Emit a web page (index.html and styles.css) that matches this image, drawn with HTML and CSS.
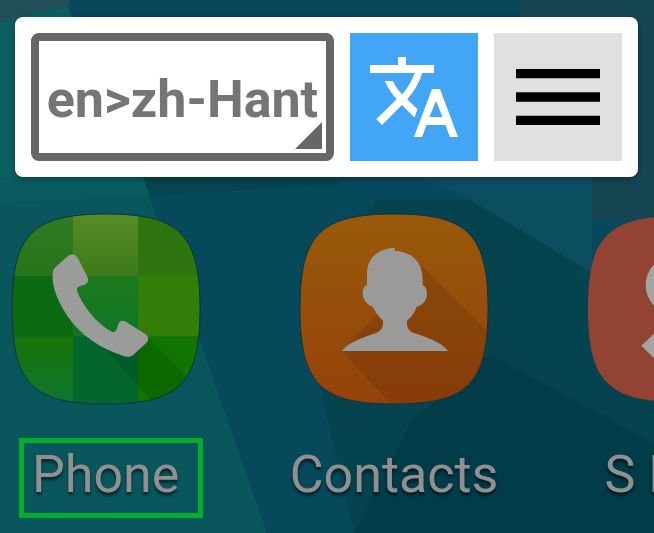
FILE: index.html
```html
<!DOCTYPE html>
<html lang="en">
<head>
    <meta charset="UTF-8">
    <meta name="viewport" content="width=device-width, initial-scale=1.0">
    <title>Translate toolbar</title>
    <link rel="stylesheet" href="styles.css">
</head>
<body>
<div class="screen">
    <!-- wallpaper -->
    <svg class="wallpaper" viewBox="0 0 654 533">
        <rect width="654" height="533" fill="#05495b"/>
        <polygon points="0,0 70,0 68,6 0,22" fill="#234f58"/>
        <polygon points="0,22 68,6 72,17 72,177 0,177" fill="#0b5f61"/>
        <polygon points="520,0 654,0 654,220 592,220 592,177 520,177" fill="#154553"/>
        <polygon points="0,177 143,177 267,533 0,533" fill="#09565c"/>
        <polygon points="0,177 143,177 149,195 0,203" fill="#0a5b5f"/>
        <polygon points="143,177 350,177 330,186 150,195" fill="#06444f"/>
        <polygon points="420,177 592,177 592,273 470,200" fill="#0a4e60"/>
        <polygon points="377,200 470,200 592,273 654,300 654,445 620,425 490,355 437,400 412,420 354,533 300,300" fill="#05434f"/>
        <polygon points="437,400 490,355 620,425 654,445 654,533 354,533 412,420" fill="#033c49"/>
    </svg>

    <div class="toolbar">
        <div class="lang-box">
            <span class="lang-text">en&gt;zh-Hant</span>
            <span class="lang-corner"></span>
        </div>
        <div class="tool-btn tool-translate">
            <svg viewBox="0 0 24 24" width="96" height="96"><path fill="#fff" d="M12.87 15.07l-2.54-2.51.03-.03c1.74-1.94 2.98-4.17 3.71-6.53H17V4h-7V2H8v2H1v1.99h11.17C11.5 7.92 10.44 9.75 9 11.35 8.07 10.32 7.3 9.19 6.69 8h-2c.73 1.63 1.73 3.17 2.98 4.56l-5.09 5.02L4 19l5-5 3.11 3.11.76-2.04zM18.5 10h-2L12 22h2l1.12-3h4.75L21 22h2l-4.5-12zm-2.62 7l1.62-4 1.62 4h-3.24z"/></svg>
        </div>
        <div class="tool-btn tool-menu">
            <svg viewBox="0 0 24 24" width="112" height="112"><path d="M3 18h18v-2H3v2zm0-5h18v-2H3v2zm0-7v2h18V6H3z"/></svg>
        </div>
    </div>

    <div class="apps">
        <div class="app">
            <!-- viewBox values are the coordinates read off the zoomed crop -->
            <svg class="app-icon" viewBox="36 42 564 570">
                <defs>
                    <clipPath id="phone-clip"><path d="M318 42C538 42 600 102 600 326C600 552 538 612 318 612C98 612 36 552 36 326C36 102 98 42 318 42Z"/></clipPath>
                    <linearGradient id="phone-tl" x1="0" y1="0" x2="0" y2="1"><stop offset="0" stop-color="#2e7a22"/><stop offset="1" stop-color="#27751b"/></linearGradient>
                    <linearGradient id="phone-tm" x1="0" y1="0" x2="0" y2="1"><stop offset="0" stop-color="#578c26"/><stop offset="1" stop-color="#3c7a17"/></linearGradient>
                    <linearGradient id="phone-bl" x1="0" y1="0" x2="0" y2="1"><stop offset="0" stop-color="#197306"/><stop offset="1" stop-color="#0e7632"/></linearGradient>
                    <linearGradient id="phone-mid" x1="0" y1="0" x2="0" y2="1"><stop offset="0" stop-color="#1d7a1c"/><stop offset="1" stop-color="#0f7528"/></linearGradient>
                </defs>
                <g clip-path="url(#phone-clip)">
                    <rect x="36" y="42" width="183" height="186" fill="url(#phone-tl)"/>
                    <rect x="219" y="42" width="195" height="186" fill="url(#phone-tm)"/>
                    <rect x="414" y="42" width="186" height="186" fill="#2e740f"/>
                    <rect x="36" y="228" width="183" height="182" fill="#0b6a12"/>
                    <rect x="219" y="228" width="195" height="182" fill="url(#phone-mid)"/>
                    <rect x="414" y="228" width="186" height="182" fill="#337e08"/>
                    <rect x="36" y="410" width="183" height="202" fill="url(#phone-bl)"/>
                    <rect x="219" y="410" width="195" height="202" fill="#04662c"/>
                    <rect x="414" y="410" width="186" height="202" fill="#0f7400"/>
                    <polygon points="445,415 610,580 610,620 470,620 300,430" fill="#000" opacity="0.1"/>
                </g>
                <path d="M36 326C36 102 98 42 318 42C538 42 600 102 600 326C600 552 538 612 318 612C98 612 36 552 36 326Z" fill="none" stroke="#0a3340" stroke-width="3"/>
                <path fill="#9a9c9a" d="M203 169C212 160 226 162 232 172L262 230C267 240 264 250 254 254L238 259C231 262 229 268 232 275C250 320 290 370 335 395C342 398 347 395 350 388L355 372C358 364 366 360 375 364L436 402C446 409 447 422 438 430L400 464C392 471 382 472 370 468C300 445 240 405 200 345C175 305 155 265 158 222C158 212 162 205 170 198Z"/>
            </svg>
            <div class="app-label app-label-marked">Phone</div>
        </div>
        <div class="app">
            <svg class="app-icon" viewBox="60 42 564 570">
                <defs>
                    <clipPath id="contact-clip"><path d="M342 42C562 42 624 102 624 326C624 552 562 612 342 612C122 612 60 552 60 326C60 102 122 42 342 42Z"/></clipPath>
                    <linearGradient id="contact-bg" x1="0" y1="0" x2="0" y2="1"><stop offset="0" stop-color="#985a0a"/><stop offset="1" stop-color="#94420a"/></linearGradient>
                </defs>
                <g clip-path="url(#contact-clip)">
                    <rect x="60" y="42" width="564" height="570" fill="url(#contact-bg)"/>
                    <polygon points="428,200 630,402 630,620 340,620 186,453" fill="#6b2f0a" opacity="0.3"/>
                </g>
                <path d="M60 326C60 102 122 42 342 42C562 42 624 102 624 326C624 552 562 612 342 612C122 612 60 552 60 326Z" fill="none" stroke="#14323a" stroke-width="3"/>
                <path fill="#9a9a98" d="M186 453C205 425 250 412 290 398C305 392 310 380 309 362C295 350 285 332 278 320C262 316 248 300 248 280C248 265 253 258 261 256L261 220C261 170 300 145 345 143L343 152C395 155 428 185 428 240L428 256C435 258 441 268 441 282C441 302 425 318 410 320C405 335 395 350 381 362C380 382 385 392 400 398C440 412 485 425 504 453Z"/>
            </svg>
            <div class="app-label">Contacts</div>
        </div>
        <div class="app">
            <svg class="app-icon" viewBox="927 42 564 570">
                <path d="M1209 48C1429 48 1491 106 1491 326C1491 548 1429 606 1209 606C989 606 927 548 927 326C927 106 989 48 1209 48Z" fill="#934333"/>
                <ellipse cx="1180" cy="255" rx="80" ry="85" fill="#a5a5a3"/>
                <polygon points="1087,437 1180,350 1180,530" fill="#a5a5a3"/>
            </svg>
            <div class="app-label">S Note</div>
        </div>
    </div>
</div>
</body>
</html>
```

FILE: styles.css
```css
html, body {
    margin: 0;
    padding: 0;
}
body {
    font-family: Roboto, "Liberation Sans", sans-serif;
}
.screen {
    position: relative;
    width: 654px;
    height: 533px;
    overflow: hidden;
}
.wallpaper {
    position: absolute;
    top: 0;
    left: 0;
    width: 654px;
    height: 533px;
}
.toolbar {
    position: relative;
    display: flex;
    gap: 16px;
    box-sizing: border-box;
    width: 623px;
    height: 160px;
    margin-top: 17px;
    margin-left: 15px;
    padding: 16px;
    background-color: #fff;
    border-radius: 8px;
    box-shadow: 0 2px 6px rgba(0, 0, 0, 0.3);
}
.lang-box {
    position: relative;
    flex: 1;
    display: flex;
    align-items: center;
    justify-content: center;
    padding-top: 5px;
    border: 8px solid #666;
    border-radius: 8px;
}
.lang-text {
    font-size: 52px;
    font-weight: 700;
    color: #757575;
}
.lang-corner {
    position: absolute;
    right: 4px;
    bottom: 4px;
    width: 27px;
    height: 27px;
    background-color: #666;
    clip-path: polygon(100% 0, 100% 100%, 0 100%);
}
.tool-btn {
    display: flex;
    align-items: center;
    justify-content: center;
    width: 128px;
    height: 128px;
}
.tool-translate {
    background-color: #42a5f5;
}
.tool-menu {
    background-color: #e0e0e0;
}
.apps {
    position: relative;
    display: grid;
    grid-template-columns: repeat(3, 188px);
    column-gap: 100px;
    padding-left: 12px;
    margin-top: 37px;
}
.app {
    display: flex;
    flex-direction: column;
    align-items: center;
}
.app-icon {
    display: block;
    width: 188px;
    height: 190px;
    overflow: visible;
}
.app-label {
    box-sizing: border-box;
    height: 80px;
    margin-top: 34px;
    border: 5px solid transparent;
    padding: 0 9px;
    font-size: 52px;
    line-height: 64px;
    color: #909090;
    white-space: nowrap;
    text-shadow: 0 3px 3px rgba(0, 0, 0, 0.55);
}
.app-label-marked {
    align-self: flex-start;
    width: 184px;
    margin-left: 7px;
    padding: 0 0 0 8px;
    border-color: #03ae2b;
}
```
